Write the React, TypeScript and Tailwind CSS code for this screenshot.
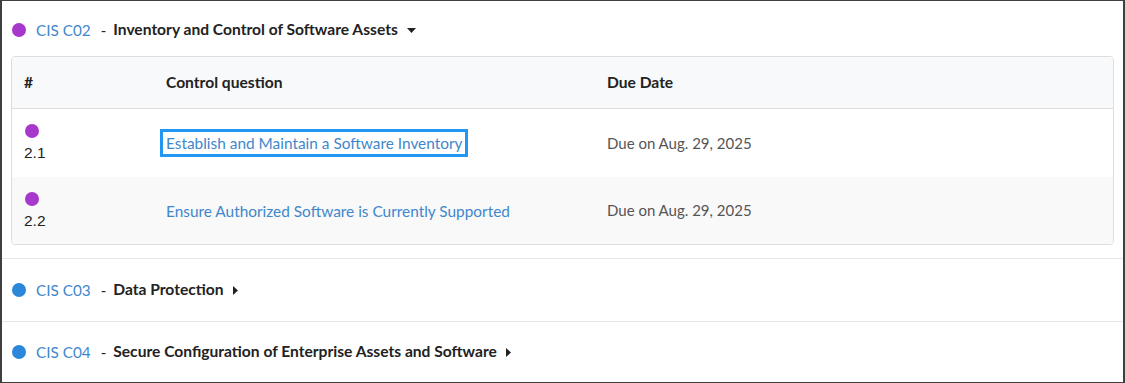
import React from "react";

const font = { fontFamily: "Lato, 'Noto Sans', sans-serif" };

function CaretDown() {
  return (
    <svg width="9" height="5" viewBox="0 0 9 5" className="ml-[9px] mt-[1px]">
      <path d="M0 0 L9 0 L4.5 5 Z" fill="#222" />
    </svg>
  );
}

function CaretRight() {
  return (
    <svg width="5" height="9" viewBox="0 0 5 9" className="ml-[9px]">
      <path d="M0 0 L5 4.5 L0 9 Z" fill="#222" />
    </svg>
  );
}

function SectionHeader({
  color,
  code,
  title,
  open,
}: {
  color: string;
  code: string;
  title: string;
  open: boolean;
}) {
  return (
    <div className="flex items-center h-[20px] pl-[1px] text-[15px]">
      <span className="w-[14px] h-[14px] rounded-full shrink-0" style={{ background: color }} />
      <span className="ml-[10px] text-[15.3px] text-[#3f87cc]">{code}</span>
      <span className="ml-[10px] mr-[7px] text-[#222]">-</span>
      <span className="font-bold text-[15.6px] text-[#222]">{title}</span>
      {open ? <CaretDown /> : <CaretRight />}
    </div>
  );
}

const rows = [
  { n: "2.1", q: "Establish and Maintain a Software Inventory", focus: true, bg: "bg-white" },
  { n: "2.2", q: "Ensure Authorized Software is Currently Supported", focus: false, bg: "bg-[#f9f9f9]" },
];

export default function App() {
  return (
    <div
      className="w-[1125px] h-[383px] bg-white border-y border-x-2 border-[#3f3f3f] overflow-hidden"
      style={font}
    >
      <div className="px-[9px] pt-[19px] pb-[13px]">
        <SectionHeader color="#a638cc" code="CIS C02" title="Inventory and Control of Software Assets" open />
        <div className="mt-[16px] border border-[#dedede] rounded-[4px] overflow-hidden">
          <div className="grid grid-cols-[142px_441px_1fr] h-[52px] items-center bg-[#f8f9fa] border-b border-[#dedede] text-[15.6px] font-bold text-[#222]">
            <div className="pl-[12px]">#</div>
            <div className="pl-[12px]">Control question</div>
            <div className="pl-[12px]">Due Date</div>
          </div>
          {rows.map((r, i) => (
            <div
              key={r.n}
              className={`grid grid-cols-[142px_441px_1fr] items-center ${r.bg} ${i === 0 ? "h-[68px]" : "h-[67px]"}`}
            >
              <div className="pl-[12px] flex flex-col items-start">
                <span className="w-[14px] h-[14px] rounded-full bg-[#a638cc] ml-[1px]" />
                <span
                  className="text-[15.5px] leading-[18px] mt-[6px] text-[#222]"
                  style={{ fontFamily: "'Liberation Sans', Arial, sans-serif" }}
                >
                  {r.n}
                </span>
              </div>
              <div className="pl-[6px]">
                <span
                  className={`inline-block text-[15.4px] leading-[18px] text-[#3f87cc] px-[3px] py-[2px] border-[3px] ${
                    r.focus ? "border-[#2196f3]" : "border-transparent"
                  }`}
                >
                  {r.q}
                </span>
              </div>
              <div className="pl-[12px] text-[15px] text-[#555]">Due on Aug. 29, 2025</div>
            </div>
          ))}
        </div>
      </div>
      <div className="border-t border-[#e6e6e6] px-[9px] pt-[21px] pb-[21px]">
        <SectionHeader color="#2b88d8" code="CIS C03" title="Data Protection" open={false} />
      </div>
      <div className="border-t border-[#e6e6e6] px-[9px] pt-[20px] pb-[20px]">
        <SectionHeader
          color="#2b88d8"
          code="CIS C04"
          title="Secure Configuration of Enterprise Assets and Software"
          open={false}
        />
      </div>
    </div>
  );
}
